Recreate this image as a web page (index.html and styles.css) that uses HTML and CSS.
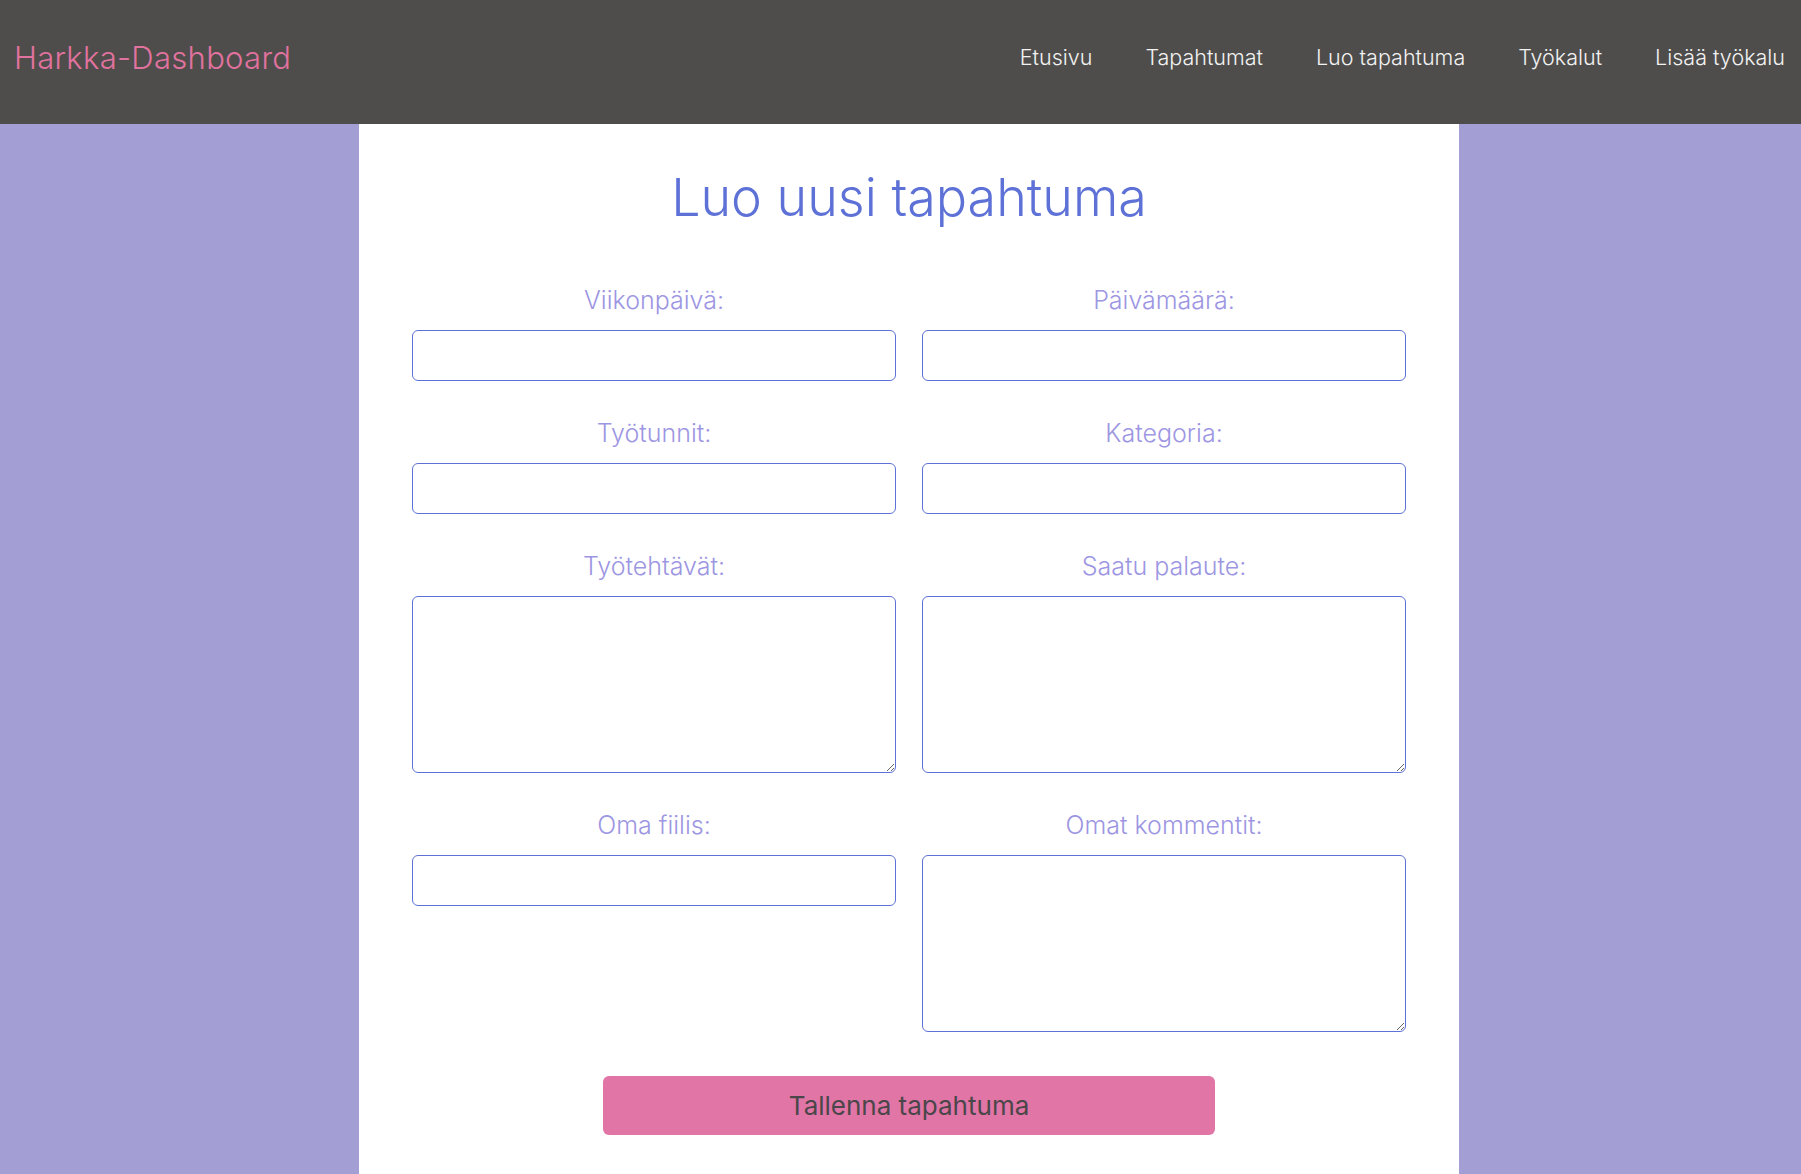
FILE: index.html
```html
<!DOCTYPE html>
<html lang="fi">
<head>
<meta charset="utf-8">
<title>Harkka-Dashboard</title>
<link rel="stylesheet" href="styles.css">
</head>
<body>
<header class="topbar">
  <a class="logo" href="#">Harkka-Dashboard</a>
  <nav class="nav">
    <a href="#">Etusivu</a>
    <a href="#">Tapahtumat</a>
    <a href="#">Luo tapahtuma</a>
    <a href="#">Työkalut</a>
    <a href="#">Lisää työkalu</a>
  </nav>
</header>
<div class="page">
  <main class="panel">
    <h1 class="title">Luo uusi tapahtuma</h1>
    <form class="form">
      <div class="grid">
        <div class="field">
          <label for="f1">Viikonpäivä:</label>
          <input id="f1" type="text">
        </div>
        <div class="field">
          <label for="f2">Päivämäärä:</label>
          <input id="f2" type="text">
        </div>
        <div class="field">
          <label for="f3">Työtunnit:</label>
          <input id="f3" type="text">
        </div>
        <div class="field">
          <label for="f4">Kategoria:</label>
          <input id="f4" type="text">
        </div>
        <div class="field">
          <label for="f5">Työtehtävät:</label>
          <textarea id="f5"></textarea>
        </div>
        <div class="field">
          <label for="f6">Saatu palaute:</label>
          <textarea id="f6"></textarea>
        </div>
        <div class="field">
          <label for="f7">Oma fiilis:</label>
          <input id="f7" type="text">
        </div>
        <div class="field">
          <label for="f8">Omat kommentit:</label>
          <textarea id="f8"></textarea>
        </div>
      </div>
      <button type="button" class="save">Tallenna tapahtuma</button>
    </form>
  </main>
</div>
</body>
</html>
```
FILE: styles.css
```css
html, body {
  margin: 0;
  padding: 0;
  height: 100%;
}
body {
  font-family: "Inter", "DejaVu Sans", sans-serif;
  font-weight: 300;
  background: #a39fd5;
  overflow: hidden;
}
.topbar {
  height: 124px;
  background: #4e4d4b;
  display: flex;
  align-items: center;
  justify-content: space-between;
  padding: 0 16px 10px 14px;
  box-sizing: border-box;
}
.logo {
  color: #e1729f;
  font-size: 31px;
  font-weight: 300;
  text-decoration: none;
  letter-spacing: 0.3px;
}
.nav {
  display: flex;
  gap: 53px;
}
.nav a {
  color: #f2f2f2;
  font-size: 21.5px;
  font-weight: 300;
  text-decoration: none;
}
.page {
  display: flex;
  padding-left: 359px;
  height: calc(100% - 124px);
}
.panel {
  width: 1100px;
  background: #ffffff;
  padding: 0 53px;
  box-sizing: border-box;
}
.title {
  margin: 34px 0 0;
  text-align: center;
  color: #5d71d6;
  font-size: 52px;
  font-weight: 300;
  line-height: 80px;
}
.form {
  display: flex;
  flex-direction: column;
  align-items: center;
  margin-top: 47px;
}
.grid {
  width: 100%;
  display: grid;
  grid-template-columns: 1fr 1fr;
  column-gap: 26px;
  row-gap: 37px;
  align-items: start;
}
.field {
  display: flex;
  flex-direction: column;
}
.field label {
  text-align: center;
  color: #9d96e2;
  font-size: 25px;
  line-height: 30px;
  font-weight: 300;
  margin-bottom: 15px;
}
.field input,
.field textarea {
  box-sizing: border-box;
  border: 1px solid #5d71d6;
  border-radius: 6px;
  background: #fff;
  font-family: inherit;
  font-size: 18px;
  margin: 0;
  padding: 8px 12px;
}
.field input {
  height: 51px;
}
.field textarea {
  height: 177px;
  resize: vertical;
}
.save {
  margin-top: 44px;
  width: 612px;
  height: 59px;
  border: none;
  border-radius: 6px;
  background: #e075a6;
  color: #4b4649;
  font-family: inherit;
  font-size: 26px;
  font-weight: 400;
}
```
